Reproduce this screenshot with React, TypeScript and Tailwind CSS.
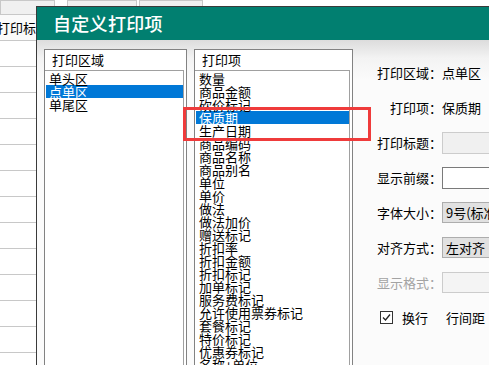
const areas = ["单头区", "点单区", "单尾区"];
const items = [
  "数量", "商品金额", "砍价标记", "保质期", "生产日期", "商品编码", "商品名称", "商品别名",
  "单位", "单价", "做法", "做法加价", "赠送标记", "折扣率", "折扣金额", "折扣标记", "加单标记",
  "服务费标记", "允许使用票券标记", "套餐标记", "特价标记", "优惠券标记", "名称+单位",
];

function ListItem({ text, selected }: { text: string; selected?: boolean }) {
  return (
    <div
      className={
        selected
          ? "h-[13px] leading-[13px] pl-[3px] whitespace-nowrap bg-[#0078d7] text-white"
          : "h-[13px] leading-[13px] pl-[3px] whitespace-nowrap text-black"
      }
    >
      {text}
    </div>
  );
}

function Row({ children }: { children: React.ReactNode }) {
  return <div className="h-[35px] flex items-center whitespace-nowrap">{children}</div>;
}

function Label({ text, gray }: { text: string; gray?: boolean }) {
  return (
    <div className={gray ? "w-[89px] shrink-0 text-right text-[#a3a3a3]" : "w-[89px] shrink-0 text-right text-black"}>{text}</div>
  );
}

export default function App() {
  return (
    <div className="relative w-[489px] h-[365px] overflow-hidden bg-white text-[13px] font-['Noto_Sans_CJK_SC',sans-serif]">
      {/* background page */}
      <div className="flex h-[15px]">
        <div className="w-[55px] h-[15px] bg-[#f0f0f0] border border-[#c8c8c8]" />
        <div className="ml-[12px] w-[70px] h-[15px] bg-[#f0f0f0] border border-[#c8c8c8]" />
        <div className="ml-[2px] w-[64px] h-[15px] bg-[#f0f0f0] border border-[#c8c8c8]" />
      </div>
      <div className="w-[37px] overflow-hidden">
        <div className="h-[26px] border-b border-[#c8c8c8] bg-[#fafafa] flex items-center">
          <span className="-ml-[3px] whitespace-nowrap text-black">打印标题</span>
        </div>
        {Array.from({ length: 13 }).map((_, i) => (
          <div key={i} className="h-[26px] border-b border-[#c8c8c8]" />
        ))}
      </div>

      {/* dialog window */}
      <div className="absolute left-[36px] top-[6px] w-[520px] h-[380px] border-l border-t border-[#3a3a3a] flex flex-col">
        <div className="h-[33px] shrink-0 bg-[#017f70] flex items-center pl-[16px] text-white text-[18px] font-medium tracking-[0.3px]">
          自定义打印项
        </div>
        <div className="flex-1 flex items-start pl-[7px] pt-[9px] bg-[linear-gradient(#dcdcdc,#f3f3f3_18px,#fbfbfb_40px)]">
          {/* 打印区域 */}
          <div className="w-[143px] shrink-0 h-[330px] border border-[#828282] bg-white flex flex-col">
            <div className="h-[20px] pl-[7px] flex items-center text-black">打印区域</div>
            <div className="flex-1 mr-[2px] border-t border-r border-[#a0a0a0] pt-[1px] pl-[1px] overflow-hidden">
              {areas.map((a) => (
                <ListItem key={a} text={a} selected={a === "点单区"} />
              ))}
            </div>
          </div>
          {/* 打印项 */}
          <div className="ml-[7px] w-[159px] shrink-0 h-[330px] border border-[#828282] bg-white flex flex-col">
            <div className="h-[20px] pl-[7px] flex items-center text-black">打印项</div>
            <div className="flex-1 mr-[2px] border-t border-r border-[#a0a0a0] pt-[1px] pl-[1px] overflow-hidden">
              {items.map((a) => (
                <ListItem key={a} text={a} selected={a === "保质期"} />
              ))}
            </div>
          </div>
          {/* right panel */}
          <div className="mt-[6px] w-[200px] shrink-0 flex flex-col">
            <Row>
              <Label text="打印区域：" />
              <span>点单区</span>
            </Row>
            <Row>
              <Label text="打印项：" />
              <span>保质期</span>
            </Row>
            <Row>
              <Label text="打印标题：" />
              <div className="w-[80px] h-[22px] bg-[#f0f0f0] border border-[#cccccc]" />
            </Row>
            <Row>
              <Label text="显示前缀：" />
              <div className="w-[80px] h-[22px] bg-white border border-[#7a7a7a]" />
            </Row>
            <Row>
              <Label text="字体大小：" />
              <div className="w-[90px] h-[21px] bg-[#e1e1e1] border border-[#adadad] pl-[3px] flex items-center">9号(标准)</div>
            </Row>
            <Row>
              <Label text="对齐方式：" />
              <div className="w-[90px] h-[21px] bg-[#e1e1e1] border border-[#adadad] pl-[3px] flex items-center">左对齐</div>
            </Row>
            <Row>
              <Label text="显示格式：" gray />
              <div className="w-[80px] h-[21px] bg-[#f4f4f4] border border-[#cccccc]" />
            </Row>
            <Row>
              <div className="ml-[27px] w-[13px] h-[13px] border border-[#333333] bg-white flex items-center justify-center">
                <svg width="11" height="11" viewBox="0 0 11 11">
                  <path d="M2 5.5 L4.5 8 L9 2.5" fill="none" stroke="#222" strokeWidth="1.3" />
                </svg>
              </div>
              <span className="ml-[9px]">换行</span>
              <span className="ml-[18px]">行间距</span>
            </Row>
          </div>
        </div>
      </div>

      {/* red highlight annotation */}
      <div className="absolute left-[183px] top-[107px] w-[188px] h-[34px] border-[3px] border-[#ef3b3b]" />
    </div>
  );
}
